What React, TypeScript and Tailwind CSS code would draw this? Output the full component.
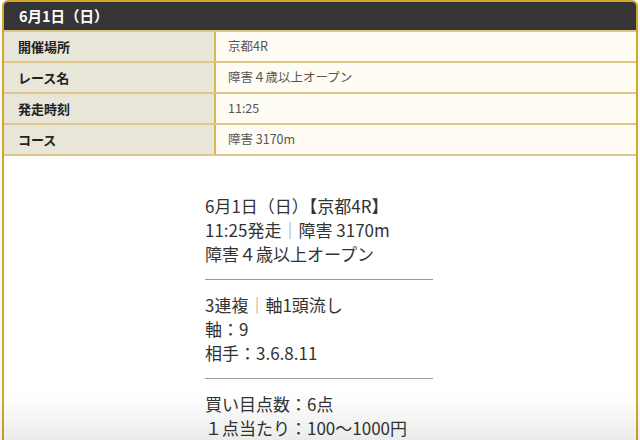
import React from "react";

const rows: [string, string][] = [
  ["開催場所", "京都4R"],
  ["レース名", "障害４歳以上オープン"],
  ["発走時刻", "11:25"],
  ["コース", "障害 3170m"],
];

const Bar = () => <span className="text-[#9a9a9a]">｜</span>;

export default function App() {
  return (
    <div
      className="w-[640px] h-[440px] overflow-hidden bg-white relative"
      style={{ fontFamily: '"Noto Sans CJK JP", "Noto Sans", sans-serif' }}
    >
      <div className="ml-[2px] w-[636px] border-2 border-[#d6a62c] rounded-t-[6px] overflow-hidden min-h-[500px]">
        <div className="h-[30px] bg-[#353535] flex items-center pl-[15px] text-white font-bold text-[14.5px] border-b-2 border-[#dfc37e]">
          6月1日（日）
        </div>
        {rows.map(([k, v]) => (
          <div
            key={k}
            className="grid grid-cols-[212px_1fr] h-[31px] border-b-2 border-[#e0c587]"
          >
            <div className="bg-[#e8e5d9] border-r-2 border-[#dcb552] flex items-center pl-[14px] text-[13px] font-bold text-[#222]">
              {k}
            </div>
            <div className="bg-[#fffcf4] flex items-center pl-[12px] text-[12.5px] text-[#555]">
              {v}
            </div>
          </div>
        ))}
        <div className="pt-[38px] pl-[201px]">
          <div className="w-[228px] text-[17px] leading-[24px] text-[#333]">
            <p>6月1日（日）【京都4R】</p>
            <p>11:25発走<Bar />障害 3170m</p>
            <p>障害４歳以上オープン</p>
            <div className="h-px bg-[#9a9a9a] my-[13px]" />
            <p>3連複<Bar />軸1頭流し</p>
            <p>軸：9</p>
            <p>相手：3.6.8.11</p>
            <div className="h-px bg-[#9a9a9a] my-[13px]" />
            <p>買い目点数：6点</p>
            <p>１点当たり：100〜1000円</p>
          </div>
        </div>
      </div>
      <div className="absolute left-0 right-0 bottom-0 h-[45px] bg-gradient-to-b from-transparent to-[rgba(0,0,0,0.08)] pointer-events-none" />
    </div>
  );
}
